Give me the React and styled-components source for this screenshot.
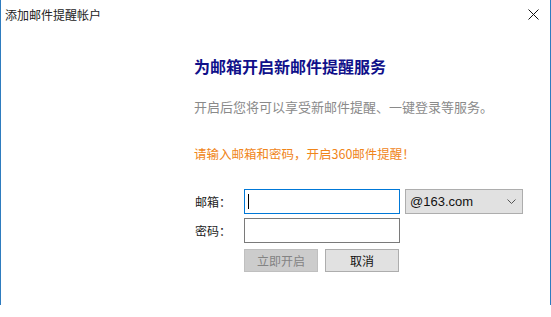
import React from 'react'
import styled, { createGlobalStyle } from 'styled-components'

const Global = createGlobalStyle`
  html, body {
    margin: 0;
    padding: 0;
    background: #fff;
  }
  body {
    font-family: "Noto Sans CJK SC", "Microsoft YaHei", sans-serif;
  }
`

const Window = styled.div`
  width: 551px;
  height: 305px;
  box-sizing: border-box;
  border-left: 1px solid #2e7cbf;
  border-right: 1px solid #2e7cbf;
  background: #fff;
  display: flex;
  flex-direction: column;
`

const TitleBar = styled.div`
  height: 28px;
  display: flex;
  align-items: center;
  justify-content: space-between;
  padding-left: 4px;
  padding-right: 10px;
`

const Title = styled.div`
  font-size: 12px;
  color: #222;
`

const Close = styled.div`
  width: 14px;
  height: 14px;
  display: flex;
  align-items: center;
  justify-content: center;
  margin-top: 1px;
`

const Body = styled.div`
  padding: 27px 0 0 193px;
  display: flex;
  flex-direction: column;
`

const Heading = styled.div`
  font-size: 16px;
  font-weight: bold;
  color: #10108a;
  line-height: 22px;
`

const Desc = styled.div`
  margin-top: 20px;
  font-size: 13px;
  color: #8a8a8a;
  line-height: 20px;
`

const Tip = styled.div`
  margin-top: 27px;
  font-size: 12.5px;
  color: #f08519;
  line-height: 20px;
`

const Form = styled.div`
  margin-top: 25px;
  display: grid;
  grid-template-columns: 50px 156px auto;
  row-gap: 4px;
  align-items: center;
`

const Label = styled.div`
  font-size: 12px;
  color: #222;
  padding-left: 1px;
`

const Input = styled.div`
  height: 25px;
  box-sizing: border-box;
  border: 1px solid ${({ $focus }) => ($focus ? '#0078d7' : '#7a7a7a')};
  background: #fff;
  display: flex;
  align-items: center;
  padding-left: 3px;
`

const Caret = styled.div`
  width: 1px;
  height: 15px;
  background: #000;
`

const Select = styled.div`
  margin-left: 5px;
  width: 118px;
  height: 25px;
  box-sizing: border-box;
  border: 1px solid #adadad;
  background: #e1e1e1;
  display: flex;
  align-items: center;
  justify-content: space-between;
  padding: 0 6px 0 4px;
  font-family: "Liberation Sans", Arial, sans-serif;
  font-size: 13px;
  color: #111;
`

const Buttons = styled.div`
  grid-column: 2 / 4;
  display: flex;
  gap: 7px;
  margin-top: 2px;
`

const Button = styled.div`
  width: 74px;
  height: 23px;
  box-sizing: border-box;
  border: 1px solid ${({ $disabled }) => ($disabled ? '#bfbfbf' : '#adadad')};
  background: ${({ $disabled }) => ($disabled ? '#cccccc' : '#e1e1e1')};
  color: ${({ $disabled }) => ($disabled ? '#838383' : '#111')};
  font-size: 12px;
  display: flex;
  align-items: center;
  justify-content: center;
`

export default function App() {
  return (
    <>
      <Global />
      <Window>
        <TitleBar>
          <Title>添加邮件提醒帐户</Title>
          <Close>
            <svg width='11' height='11' viewBox='0 0 11 11'>
              <path d='M0.5 0.5L10.5 10.5M10.5 0.5L0.5 10.5' stroke='#111' strokeWidth='1' fill='none' />
            </svg>
          </Close>
        </TitleBar>
        <Body>
          <Heading>为邮箱开启新邮件提醒服务</Heading>
          <Desc>开启后您将可以享受新邮件提醒、一键登录等服务。</Desc>
          <Tip>请输入邮箱和密码，开启360邮件提醒！</Tip>
          <Form>
            <Label>邮箱：</Label>
            <Input $focus>
              <Caret />
            </Input>
            <Select>
              <span>@163.com</span>
              <svg width='9' height='5' viewBox='0 0 9 5'>
                <path d='M0.5 0.5L4.5 4.5L8.5 0.5' stroke='#555' strokeWidth='1' fill='none' />
              </svg>
            </Select>
            <Label>密码：</Label>
            <Input />
            <div />
            <Buttons>
              <Button $disabled>立即开启</Button>
              <Button>取消</Button>
            </Buttons>
          </Form>
        </Body>
      </Window>
    </>
  )
}
